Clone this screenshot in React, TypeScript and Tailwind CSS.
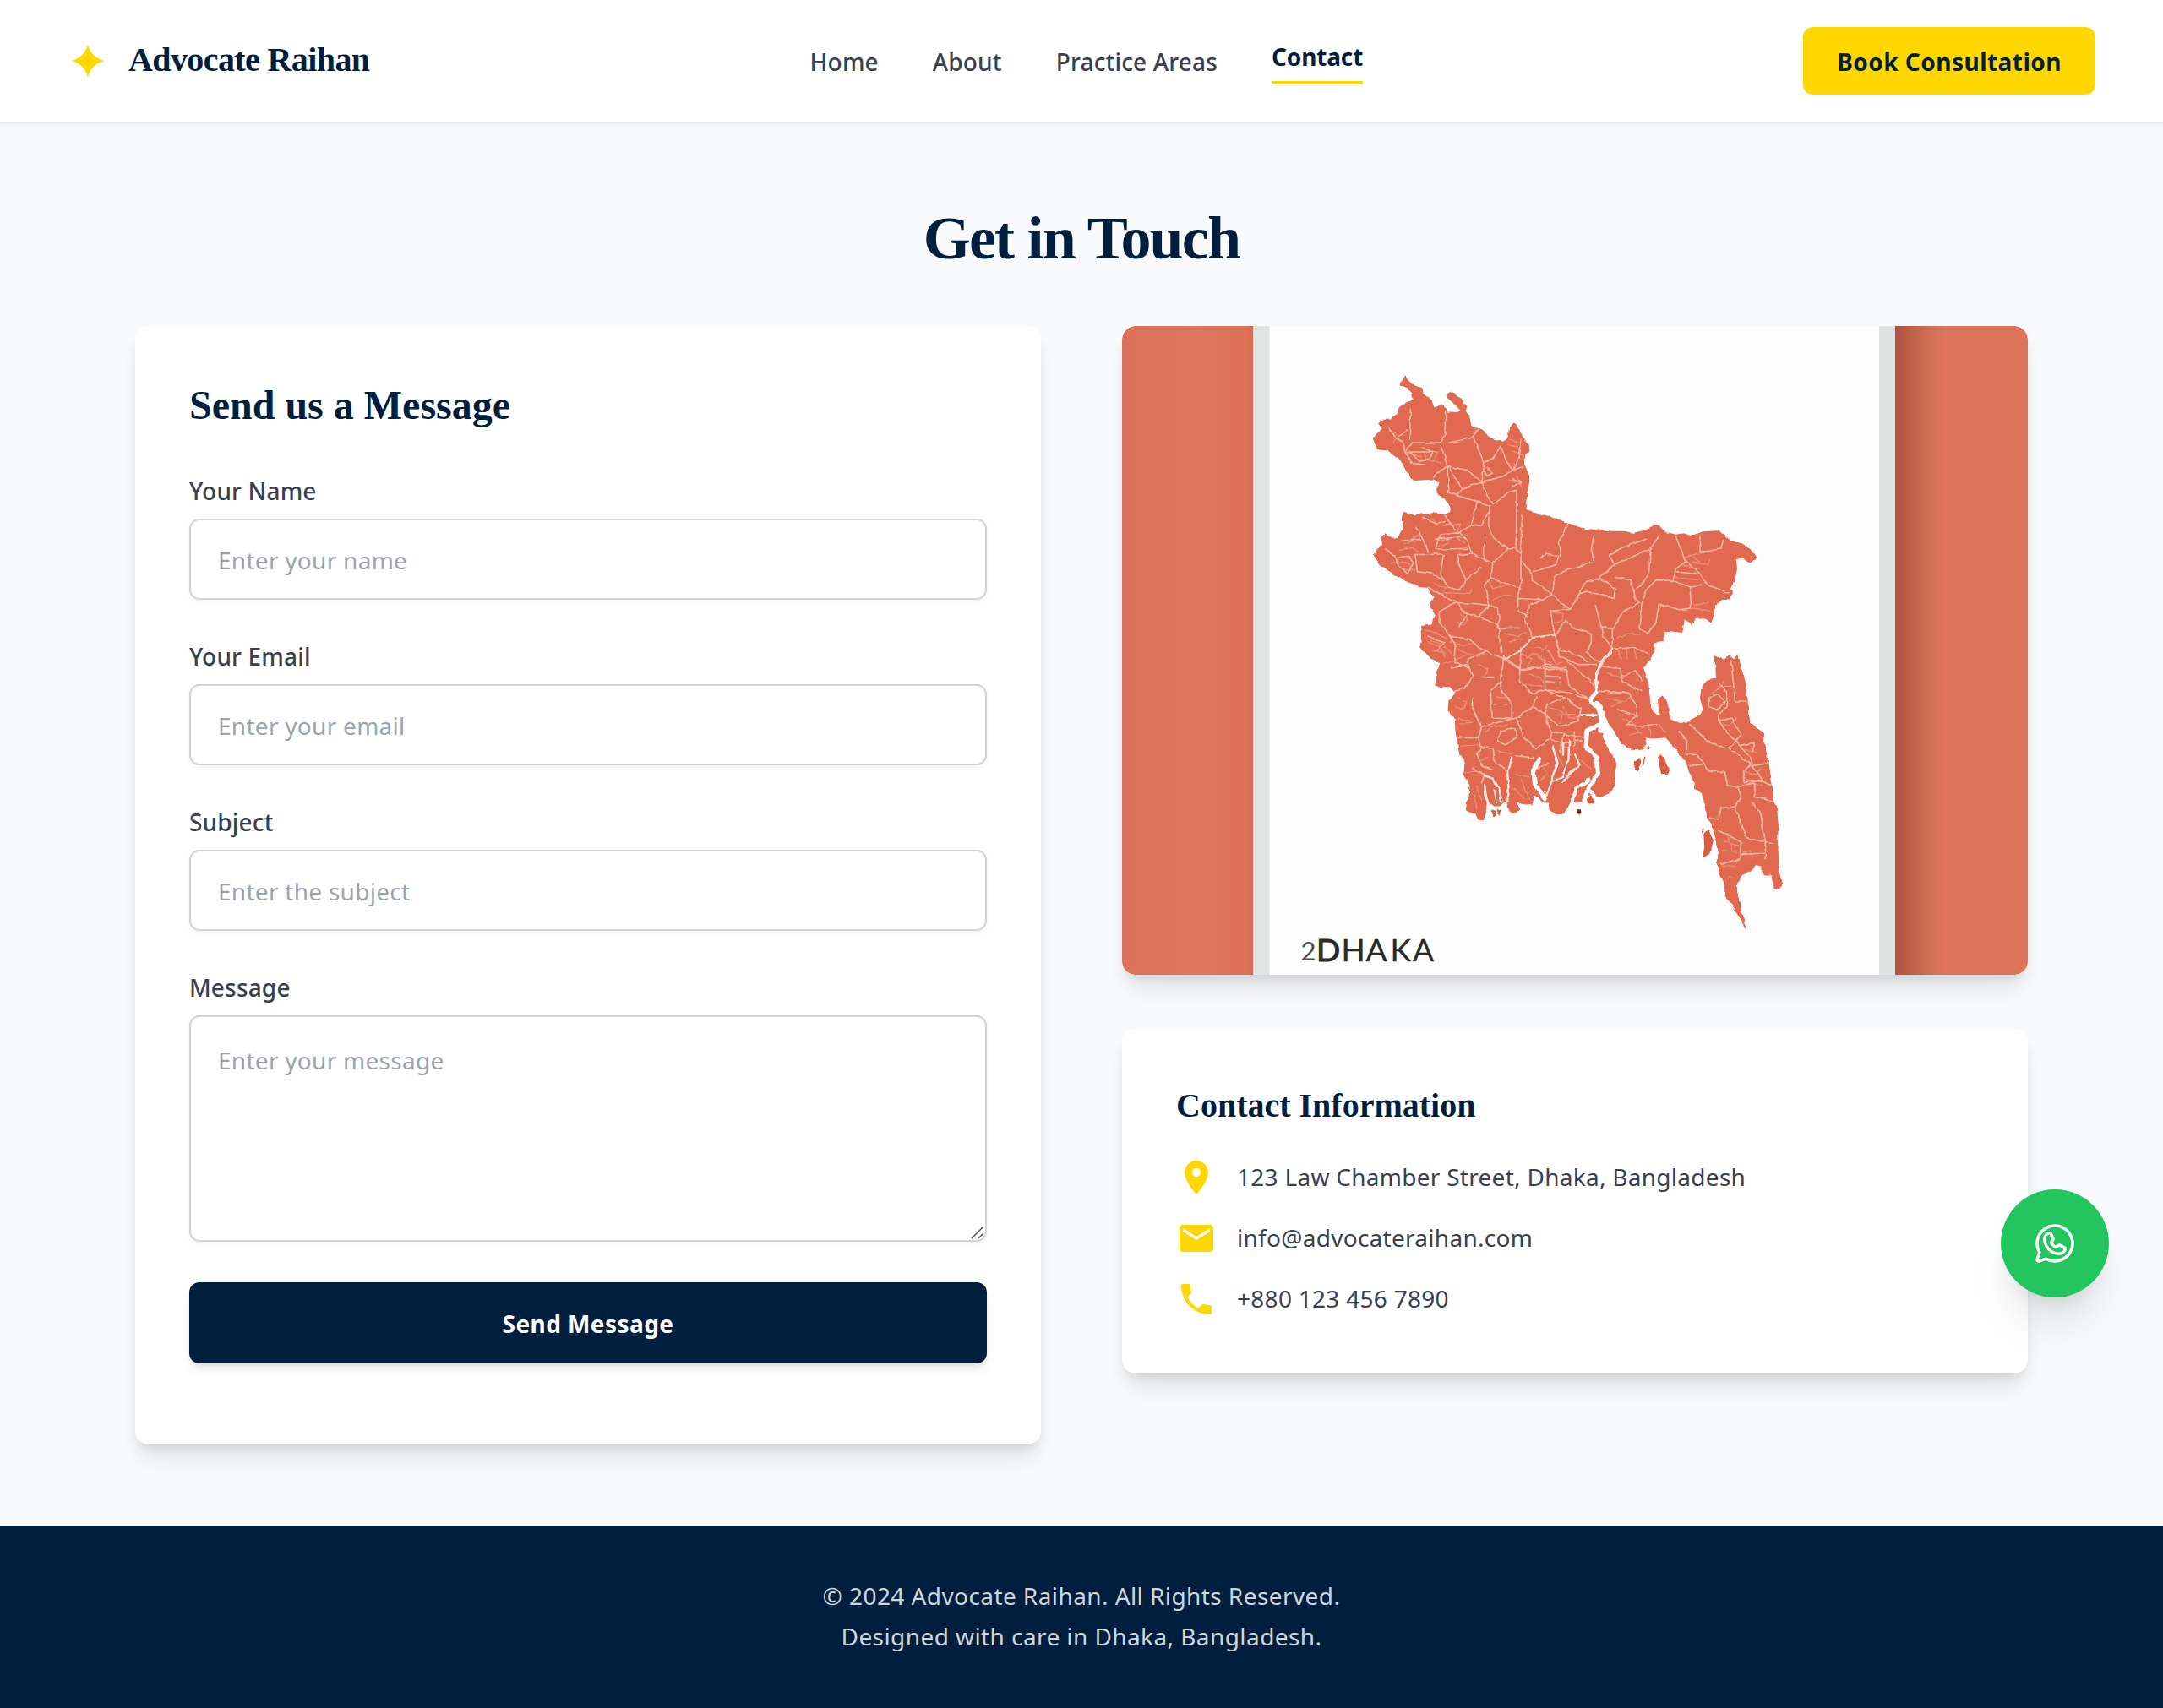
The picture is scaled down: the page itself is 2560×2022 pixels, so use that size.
import React from "react";
import { PiWhatsappLogo } from "react-icons/pi";

const navItems = ["Home", "About", "Practice Areas"];

const fields = [
  { label: "Your Name", placeholder: "Enter your name", type: "text" },
  { label: "Your Email", placeholder: "Enter your email", type: "email" },
  { label: "Subject", placeholder: "Enter the subject", type: "text" },
];

const contacts = [
  {
    text: "123 Law Chamber Street, Dhaka, Bangladesh",
    path: "M12 2C8.13 2 5 5.13 5 9c0 5.25 7 13 7 13s7-7.75 7-13c0-3.87-3.13-7-7-7zm0 9.5c-1.38 0-2.5-1.12-2.5-2.5s1.12-2.5 2.5-2.5 2.5 1.12 2.5 2.5-1.12 2.5-2.5 2.5z",
  },
  {
    text: "info@advocateraihan.com",
    path: "M20 4H4c-1.1 0-1.99.9-1.99 2L2 18c0 1.1.9 2 2 2h16c1.1 0 2-.9 2-2V6c0-1.1-.9-2-2-2zm0 4l-8 5-8-5V6l8 5 8-5v2z",
  },
  {
    text: "+880 123 456 7890",
    path: "M6.62 10.79c1.44 2.83 3.76 5.14 6.59 6.59l2.2-2.2c.27-.27.67-.36 1.02-.24 1.12.37 2.33.57 3.57.57.55 0 1 .45 1 1V20c0 .55-.45 1-1 1-9.39 0-17-7.61-17-17 0-.55.45-1 1-1h3.5c.55 0 1 .45 1 1 0 1.25.2 2.45.57 3.57.11.35.03.74-.25 1.02l-2.2 2.2z",
  },
];

const northLand =
  "M190,76 205,100 225,115 248,122 252,140 282,162 290,192 305,188 318,180 334,192 336,204 375,206 388,198 372,180 355,165 338,150 345,136 355,132 372,148 388,158 395,172 407,184 400,203 416,220 422,250 452,265 480,288 512,308 525,302 540,310 552,300 558,285 560,258 578,247 592,262 604,290 628,322 626,342 614,350 610,388 628,430 629,450 620,490 614,555 690,573 760,597 830,622 860,626 885,622 920,628 960,628 1000,634 1040,625 1088,606 1112,632 1150,640 1180,636 1200,644 1225,638 1245,630 1300,627 1325,645 1345,662 1385,672 1412,690 1434,720 1415,737 1390,720 1362,725 1366,760 1358,800 1342,830 1348,845 1335,868 1315,868 1285,890 1285,920 1275,950 1255,935 1220,936 1210,955 1180,937 1172,985 1150,982 1110,978 1105,1018 1072,1022 1068,1060 1050,1065 1030,1100 1040,1140 1040,1160 305,1160 305,1140 315,1095 280,1075 250,1045 246,965 285,960 298,925 278,890 292,862 270,825 240,824 180,795 135,770 105,745 76,712 110,672 107,650 122,636 145,652 165,650 180,620 184,560 210,566 222,574 245,564 262,570 285,564 330,568 350,560 354,545 333,508 305,495 302,472 312,455 290,440 240,444 208,438 190,400 168,370 125,338 92,335 76,296 110,262 96,245 105,232 135,232 165,215 168,190 195,170 220,160 215,135 195,112 172,108Z";

const southLand =
  "M232,0 228,50 262,82 296,100 284,130 274,180 300,188 325,188 342,208 322,240 320,270 342,305 345,350 356,420 378,465 374,500 392,540 388,590 378,605 380,628 398,637 412,640 418,660 435,662 442,640 446,600 468,612 490,612 505,600 516,595 516,615 525,632 545,636 556,625 545,600 575,606 598,604 602,570 640,600 654,600 655,625 680,642 705,638 720,605 735,590 742,600 760,598 780,575 800,570 820,582 845,570 868,545 872,460 862,430 835,390 828,350 822,320 838,300 870,345 895,390 925,410 965,408 975,390 968,368 1000,372 1040,368 1075,410 1110,460 1118,490 1138,530 1135,550 1160,565 1175,620 1178,655 1185,665 1195,690 1208,740 1215,795 1205,815 1225,860 1240,905 1238,935 1265,970 1285,1005 1303,1043 1300,1015 1288,980 1285,955 1275,935 1276,895 1290,860 1320,845 1340,822 1355,828 1365,858 1395,858 1400,900 1415,906 1424,895 1415,840 1410,740 1412,680 1408,630 1395,590 1392,540 1380,460 1366,395 1365,355 1320,320 1312,280 1310,225 1305,180 1288,120 1280,78 1268,90 1252,76 1232,97 1205,76 1208,158 1180,165 1160,190 1155,230 1165,270 1155,290 1110,315 1085,320 1055,305 1050,265 1040,235 1028,222 1015,235 1018,275 1020,298 1005,285 988,250 982,180 965,120 985,95 998,70 1000,30 1032,28 1035,0Z";

const islands =
  "M938,455 L952,442 958,460 945,490 935,488Z M966,436 L971,440 968,466 962,470Z M1014,440 L1025,430 1040,450 1052,482 1046,500 1025,502Z M978,404 L985,399 988,410 980,412Z M1166,712 L1180,692 1198,735 1188,780 1162,795 1168,760Z M1158,690 L1166,696 1164,710 1158,706Z M460,628 L476,632 478,648 466,652Z M484,628 L494,630 490,644 482,642Z M778,588 L792,574 804,590 798,604 782,604Z";

const northLines =
  "M208,195 205,300M332,200 330,285 312,312 215,312 190,345 300,345M345,312 425,295 450,265M312,312 328,360 338,395 410,410 462,452 540,430 575,412 608,400M430,290 455,350 470,385 462,452M530,325 495,370 470,385M530,325 545,370 575,412M600,300 592,360 575,412M338,395 290,435M338,395 345,490 372,500 445,520 490,540M345,400 390,475 462,452M390,475 372,500M462,452 480,500 498,530 555,490 585,480M490,540 485,600 500,650 555,690 590,685M585,480 585,560 582,690 600,710 600,800 590,860M605,570 598,710M445,520 425,605 455,610 485,560M330,570 360,615 410,660 425,705 500,740 555,690M425,605 385,630 315,640 300,690 410,688M230,610 250,650 268,700M220,710 320,708M225,710 232,770 290,778 320,800M160,720 200,715 220,740 200,775 165,750 160,720M325,710 315,780 340,825 380,835 405,800 378,740 380,710 425,705M470,650 470,730 500,740 495,795 590,825M405,800 460,755M270,825 330,860 370,880 450,885 490,890 470,820 495,795M370,880 310,910 310,950 350,1000 420,1010 450,1040 540,1080 600,1050 640,1005 720,995M370,880 410,920 380,965M450,930 490,890 520,900 525,940 515,970 600,970M410,920 450,930 520,960 530,1060M590,860 590,910 625,930M680,870 630,890 615,940 640,1000M590,865 680,870 712,850 775,905M712,850 720,790 760,765 860,735 850,690 860,640M770,600 735,660 742,705 728,745 645,770M605,735 640,780 640,800 712,850M665,725 690,705 730,715M775,905 805,850 830,805 880,795 930,745 915,710 960,685 1045,655M930,745 1060,690 1090,640M880,795 935,830 930,865 835,840 805,850M935,790 990,800 1005,860 1020,880 960,915 925,975 885,965 865,890M1060,690 1055,770 1030,820 1005,830M1030,880 1040,840 1080,800 1140,802 1200,825 1205,900 1160,905 1090,885 1080,950 1050,990 1020,970 1030,880M1140,802 1150,760 1185,735 1150,645M1185,735 1220,760 1240,790 1270,820 1335,845M1200,825 1240,820M1235,640 1240,700 1310,690 1320,655M1150,770 1235,780M720,995 705,910 775,905M720,995 760,940 785,970 850,990 850,1020 835,1060 890,1100M925,975 925,1045M885,965 890,1000 925,1045 1000,1040 1050,1060M540,1080 600,1115 760,1110M350,1000 370,1040 365,1090 410,1110M720,995 740,1050 800,1065 835,1090M130,262 150,290 180,310 190,345 215,385 260,390M165,290 195,270M205,345 240,375 275,370 290,345 250,330M250,580 300,600 330,590M180,660 245,655M300,655 410,645M120,690 160,720M480,400 500,420 480,430 470,410M570,440 600,450 570,470M270,1000 330,1020 300,1050";

const fineNorthLines =
  "M130,262 165,290 150,312M200,350 245,360 240,385M255,345 265,370 290,380M305,345 290,375 315,385M180,655 225,665 M185,675 235,640M165,695 215,685 235,700M140,740 180,735 215,750M180,760 225,765M280,580 310,605 350,600M355,605 385,600 375,625M320,660 370,650 400,670M310,680 350,660M290,810 335,830 320,850 350,845M350,845 420,850 425,830M385,920 410,935 400,960 375,950M260,980 300,990 340,1010M270,1020 310,1035 330,1070M350,1020 390,1030 430,1025M380,1050 440,1070 470,1060M540,990 590,1000 620,985M560,1020 600,1010M705,915 750,920 745,945 715,950M740,895 765,900M600,1060 640,1080 620,1110M650,1040 700,1050 720,1090M660,1070 760,1130M690,1030 680,1110M945,1050 955,1080M975,1045 980,1080M1005,1045 1010,1080M940,1005 980,990 1020,995M1150,790 1230,800M1165,750 1210,755M1200,710 1235,735M1210,735 1265,745 1270,725M1180,720 1235,705M1210,900 1280,910M1215,885 1270,880M560,300 590,310M555,320 600,330M570,345 605,355M585,430 600,470M555,445 590,450M480,800 500,830 540,820M500,870 550,850 590,860";

const southLines =
  "M500,80 492,170 460,205 465,300 530,303 530,250 495,200 492,170M330,120 385,110 400,155 470,160M340,205 375,195 400,155M385,110 385,90 440,65M560,50 555,170 600,215 640,200 640,110 560,130 520,95 500,80M640,200 700,225 760,265M640,200 720,210 785,235M720,185 785,235M715,100 800,180M640,110 710,130 720,185M680,30 690,80 750,110 808,110M610,225 600,260 545,300 430,330 420,370 355,370M540,335 490,345 485,380 510,395 545,370 540,335M545,300 570,370 610,410 655,375 660,350 640,290 605,265M640,290 650,250 700,230M640,290 690,330 750,310 760,265M400,225 395,250 425,325M420,370 425,400 465,410 470,450 520,495M430,410 415,430 430,470 465,480M545,435 600,440M660,350 720,360 775,370M655,375 700,390 760,380M820,115 890,125 895,170 960,205M820,205 915,210 940,250 945,290 880,270M945,290 910,325 960,330 1010,320M895,150 940,135 960,165M1120,320 1175,380 1245,410 1290,360 1260,300 1215,310 1240,350 1270,380M1255,90 1265,180 1270,240 1305,240M1215,180 1245,210 1240,260 1215,290 1215,310M1185,225 1215,215 1235,240 1210,270 1185,260 1185,225M1270,380 1320,440 1330,470 1380,460M1250,410 1325,465 1295,490 1300,530 1350,520 1390,540M1325,465 1360,520M1110,430 1145,430 1185,490 1235,490 1245,540 1280,545 1290,580 1270,615 1220,620 1215,660 1185,655M1280,545 1335,530 1335,580 1395,595M1270,615 1305,725 1400,748M1325,600 1355,640 1370,740 1370,800M1215,700 1290,740 1285,800 1220,820M1285,785 1370,780M1085,350 1110,380 1110,430M1120,470 1160,465M400,480 440,500 430,530M640,130 690,125M645,150 690,155M645,170 690,175M700,360 690,420M740,350 735,400M610,480 650,460M1290,400 1330,390 1330,420";

const fineSouthLines =
  "M250,20 300,35 330,70M265,60 310,70M300,110 350,90 380,75M420,110 450,125 445,150M580,90 600,70 630,80M590,145 620,155 640,180M575,180 630,190M650,60 680,110 700,100M345,225 380,240 370,270 340,260M350,300 390,310M480,225 520,230M470,250 515,250M650,260 700,280 690,320M670,290 740,290M700,260 720,300 755,300M440,350 470,330 520,325M360,400 420,395M480,420 540,425M420,450 450,440M380,490 430,490M850,140 900,160M840,230 890,240M860,260 920,230M900,300 930,320 950,350M920,360 960,350M980,320 990,360M1020,320 1040,350M1210,190 1260,190M1195,210 1225,190 1230,170M1220,320 1250,330 1275,300M1300,410 1340,425M1300,490 1340,500 1355,480M1310,520 1360,540M1235,740 1280,750M1245,720 1260,770M1230,770 1275,775M1225,825 1265,830 1280,800M1250,860 1270,870M1300,780 1320,770 1325,800M540,550 570,590M560,520 590,590M545,500 590,510M630,470 650,500 620,520M680,430 700,470M690,400 750,410M360,320 400,315M410,540 430,590M400,560 415,620M760,450 790,480";

const thinRivers =
  "M530,440 516,500 520,560 516,595M440,505 470,515 490,560 497,600M440,540 445,580 455,612M470,560 478,600M665,400 682,460 660,520 640,592M720,380 718,450 700,510 660,525M740,430 755,465 730,490 700,530M700,390 700,430";

function MapPoster() {
  return (
    <svg viewBox="0 0 1072 768" className="block h-[768px] w-full rounded-2xl" role="img" aria-label="Map of Dhaka, Bangladesh">
      <defs>
        <linearGradient id="wallLeft" x1="0" x2="1" y1="0" y2="0">
          <stop offset="0" stopColor="#de7159" />
          <stop offset="0.6" stopColor="#df765d" />
          <stop offset="0.95" stopColor="#de7156" />
          <stop offset="1" stopColor="#d96a50" />
        </linearGradient>
        <linearGradient id="wallRight" x1="0" x2="1" y1="0" y2="0">
          <stop offset="0" stopColor="#b0523f" />
          <stop offset="0.12" stopColor="#bd614a" />
          <stop offset="0.25" stopColor="#cf6f56" />
          <stop offset="0.38" stopColor="#dd755b" />
          <stop offset="1" stopColor="#df735a" />
        </linearGradient>
        <filter id="coast" x="-5%" y="-5%" width="110%" height="110%">
          <feTurbulence type="fractalNoise" baseFrequency="0.09" numOctaves="2" seed="4" result="n" />
          <feDisplacementMap in="SourceGraphic" in2="n" scale="4" xChannelSelector="R" yChannelSelector="G" />
          <feGaussianBlur stdDeviation="0.6" />
        </filter>
      </defs>
      <rect width="1072" height="768" fill="#fdfdfd" />
      <rect width="156" height="768" fill="url(#wallLeft)" />
      <rect x="155" width="19.5" height="768" fill="#dfe5e3" />
      <rect x="896" width="19.5" height="768" fill="#dfe3e1" />
      <rect x="915" width="157" height="768" fill="url(#wallRight)" />
      <g filter="url(#coast)" strokeLinejoin="round" strokeLinecap="round">
        <g transform="translate(272 34) scale(0.33333)">
          <path d={northLand} fill="#e0694f" stroke="#e0694f" strokeWidth="4" />
        </g>
        <g transform="translate(272 364) scale(0.35714 0.33333)">
          <path d={southLand} fill="#e0694f" stroke="#e0694f" strokeWidth="3" />
          <path d={islands} fill="#dc5a40" />
          <circle cx="753" cy="634" r="7" fill="#6b2a26" />
          <path d={fineSouthLines} fill="none" stroke="#eb9279" strokeWidth="4" />
          <path d={southLines} fill="none" stroke="#f2b59f" strokeWidth="5" />
          <path d={thinRivers} fill="none" stroke="#fbe9e2" strokeWidth="7" />
          <path d="M858,68 820,108 808,155 812,205" fill="none" stroke="#fbeee9" strokeWidth="10" />
          <path d="M812,205 788,238 822,272 826,320 780,345 776,400 812,438 816,500 785,545 770,590" fill="none" stroke="#fdfdfd" strokeWidth="14" />
          <path d="M812,250 838,310 826,340" fill="none" stroke="#fdfdfd" strokeWidth="20" />
          <path d="M620,445 602,485 606,535 640,585" fill="none" stroke="#fdfdfd" strokeWidth="14" />
          <path d="M785,520 745,550 730,600 M790,560 815,585" fill="none" stroke="#fdfdfd" strokeWidth="12" />
          <path d="M760,290 810,290 M1185,690 1202,730 1206,790" fill="none" stroke="#fdfdfd" strokeWidth="8" />
        </g>
        <g transform="translate(272 34) scale(0.33333)" fill="none">
          <path d={fineNorthLines} stroke="#eb9279" strokeWidth="4" />
          <path d={northLines} stroke="#f2b59f" strokeWidth="5" />
          <path d="M540,1080 600,1050 640,1005 720,995M925,1045 885,1100 870,1130" stroke="#f8d6c9" strokeWidth="7" />
        </g>
      </g>
      <g fontFamily="Lato, sans-serif">
        <text x="211.5" y="750.5" fontSize="31" fill="#4a4f4e">2</text>
        <text x="230" y="752" fontSize="37" fill="#262a29" stroke="#262a29" strokeWidth="1">D</text>
        <text x="259.5 288.5 317.5 344" y="752" fontSize="37" fill="#262a29" stroke="#262a29" strokeWidth="0.3">HAKA</text>
      </g>
    </svg>
  );
}

export default function App() {
  return (
    <div className="relative min-h-[2022px] w-full bg-[#f9fafc] font-['Noto_Sans',sans-serif] text-[28px] leading-[40px] tracking-[0.01em] text-[#374151]">
      <header className="flex items-center justify-between border-b-2 border-[#e5e7eb] bg-white px-20 py-8 shadow-[0_2px_4px_0_rgba(0,0,0,0.05)]">
        <div className="flex items-center gap-6">
          <svg viewBox="0 0 48 48" className="size-12 text-[#ffd700]" fill="currentColor">
            <path d="M24 4C25.7818 14.2173 33.7827 22.2182 44 24C33.7827 25.7818 25.7818 33.7827 24 44C22.2182 33.7827 14.2173 25.7818 4 24C14.2173 22.2182 22.2182 14.2173 24 4Z" />
          </svg>
          <h2 className="pb-[3px] font-['Liberation_Serif',serif] text-[40px] leading-[50px] font-bold tracking-[-0.015em] text-[#001f3f]">
            Advocate Raihan
          </h2>
        </div>
        <nav className="flex items-center gap-16 pt-[3px] font-medium tracking-[0.006em]">
          {navItems.map((item) => (
            <a key={item} href="#" className="mb-px">
              {item}
            </a>
          ))}
          <a href="#" className="border-b-4 border-[#ffd700] pb-[9px] font-bold tracking-[-0.005em] text-[#001f3f]">
            Contact
          </a>
        </nav>
        <button className="h-20 rounded-xl bg-[#ffd700] px-10 pt-[2px] font-bold tracking-[0.017em] text-[#001f3f] shadow-[0_2px_4px_0_rgba(0,0,0,0.05)]">
          Book Consultation
        </button>
      </header>

      <main className="px-40 py-24">
        <h1 className="mb-16 text-center font-['Liberation_Serif',serif] text-[72px] leading-[80px] font-bold tracking-tight text-[#001f3f]">
          Get in Touch
        </h1>
        <div className="grid grid-cols-2 items-start gap-24">
          <section className="rounded-2xl bg-white px-16 pt-16 pb-24 shadow-[0_20px_30px_-6px_rgba(0,0,0,0.1),0_8px_12px_-4px_rgba(0,0,0,0.1)]">
            <h2 className="mb-[52px] font-['Liberation_Serif',serif] text-[48px] leading-[60px] font-bold tracking-normal text-[#001f3f]">
              Send us a Message
            </h2>
            <form className="flex flex-col gap-12">
              {fields.map((f) => (
                <label key={f.label} className="flex flex-col gap-3.5">
                  <span className="leading-[38px] font-medium tracking-[0.006em]">{f.label}</span>
                  <input
                    type={f.type}
                    placeholder={f.placeholder}
                    className="h-24 w-full rounded-xl border-2 border-[#d1d5db] bg-white px-8 pt-px shadow-[0_2px_4px_0_rgba(0,0,0,0.05)] placeholder:text-[#9ca3af]"
                  />
                </label>
              ))}
              <label className="flex flex-col gap-3.5">
                <span className="leading-[38px] font-medium tracking-[0.006em]">Message</span>
                <span className="relative block h-[268px]">
                  <textarea
                    placeholder="Enter your message"
                    className="block h-[268px] w-full resize-none rounded-xl border-2 border-[#d1d5db] bg-white px-8 pt-[31px] shadow-[0_2px_4px_0_rgba(0,0,0,0.05)] placeholder:text-[#9ca3af]"
                  />
                  <svg viewBox="0 0 16 16" className="absolute right-[3px] bottom-[3px] size-4" fill="none" stroke="#555" strokeWidth="1.5">
                    <path d="M1 15 15 1M9 15l6-6" />
                  </svg>
                </span>
              </label>
              <button
                type="button"
                className="h-24 w-full rounded-xl bg-[#001f3f] pt-px font-bold tracking-[0.015em] text-white shadow-[0_8px_12px_-2px_rgba(0,0,0,0.1),0_4px_8px_-4px_rgba(0,0,0,0.1)]"
              >
                Send Message
              </button>
            </form>
          </section>

          <div className="flex flex-col gap-16">
            <div className="overflow-hidden rounded-2xl shadow-[0_20px_30px_-6px_rgba(0,0,0,0.1),0_8px_12px_-4px_rgba(0,0,0,0.1)]">
              <MapPoster />
            </div>
            <section className="rounded-2xl bg-white p-16 shadow-[0_20px_30px_-6px_rgba(0,0,0,0.1),0_8px_12px_-4px_rgba(0,0,0,0.1)]">
              <h3 className="mb-[35px] font-['Liberation_Serif',serif] text-[40px] leading-[53px] font-bold tracking-normal text-[#001f3f]">
                Contact Information
              </h3>
              <ul className="flex flex-col gap-6">
                {contacts.map((c) => (
                  <li key={c.text} className="flex h-12 items-center gap-6">
                    <svg viewBox="0 0 24 24" className="size-12 shrink-0 text-[#ffd700]" fill="currentColor">
                      <path d={c.path} />
                    </svg>
                    <span className="pb-0.5 leading-[38px]">{c.text}</span>
                  </li>
                ))}
              </ul>
            </section>
          </div>
        </div>
      </main>

      <footer className="flex flex-col gap-2 bg-[#001f3f] py-16 text-center leading-[38px] tracking-[0.015em] text-[#d1d5db]">
        <p className="pb-0.5">© 2024 Advocate Raihan. All Rights Reserved.</p>
        <p className="pb-0.5">Designed with care in Dhaka, Bangladesh.</p>
      </footer>

      <a
        href="#"
        aria-label="WhatsApp"
        className="absolute top-[1408px] right-16 flex size-32 items-center justify-center rounded-full bg-[#22c55e] text-white shadow-[0_40px_50px_-10px_rgba(0,0,0,0.1),0_16px_20px_-12px_rgba(0,0,0,0.1)]"
      >
        <PiWhatsappLogo className="size-14" />
      </a>
    </div>
  );
}
